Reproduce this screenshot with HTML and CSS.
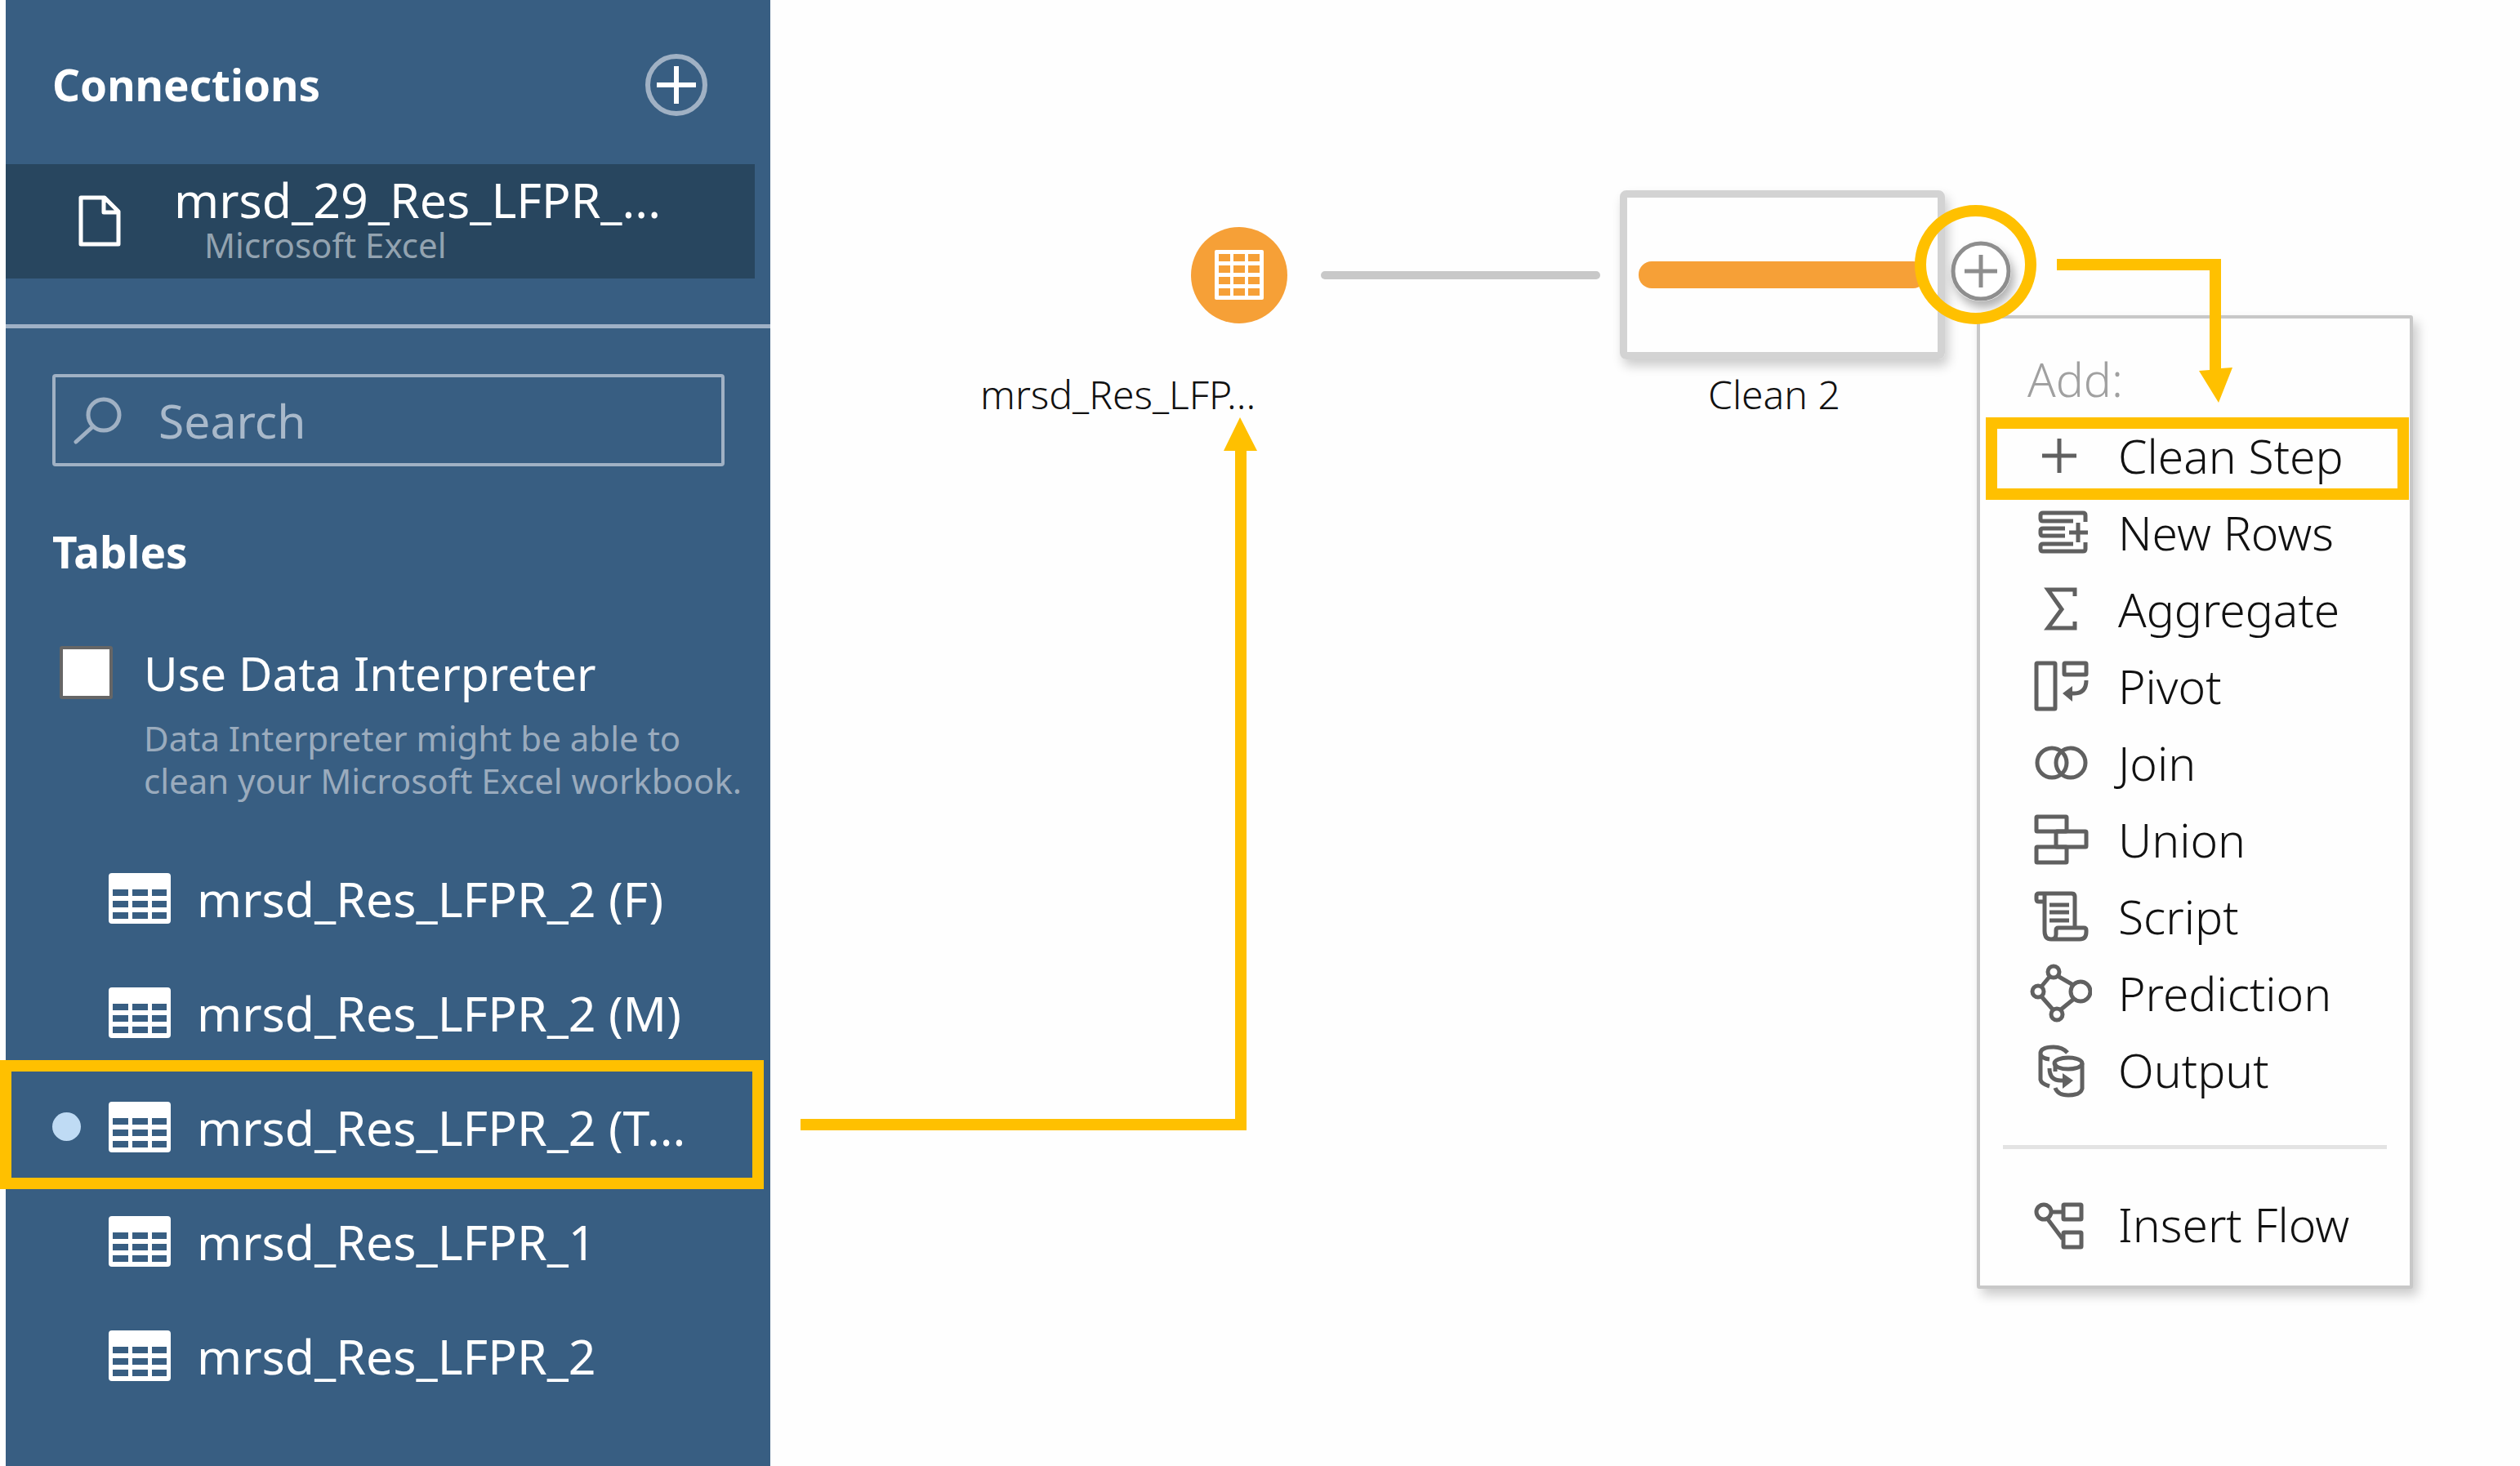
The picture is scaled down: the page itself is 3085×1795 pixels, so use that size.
FILE: index.html
```html
<!DOCTYPE html>
<html lang="en">
<head>
<meta charset="utf-8">
<title>Flow</title>
<link rel="stylesheet" href="styles.css">
</head>
<body>
<svg class="defs" aria-hidden="true">
  <symbol id="sheet" viewBox="0 0 76 62">
    <path fill="currentColor" fill-rule="evenodd" d="M4 0H72Q76 0 76 4V58Q76 62 72 62H4Q0 62 0 58V4Q0 0 4 0ZM5 20V28H24V20ZM29 20V28H48V20ZM53 20V28H71V20ZM5 34V42H24V34ZM29 34V42H48V34ZM53 34V42H71V34ZM5 48V56H24V48ZM29 48V56H48V48ZM53 48V56H71V48Z"/>
  </symbol>
</svg>
<div class="app">
  <aside class="sidebar">
    <header class="sidebar-head">
      <h2 class="heading">Connections</h2>
      <button class="add-connection" type="button" aria-label="Add connection">
        <svg viewBox="0 0 78 78"><circle cx="39" cy="39" r="35" fill="none" stroke="#a0b1c4" stroke-width="6"/><path d="M15 39H63M39 16V62" stroke="#fff" stroke-width="6"/></svg>
      </button>
    </header>
    <button class="connection" type="button">
      <svg class="file-icon" viewBox="0 0 54 64"><path d="M4 3H33L50 20V60H4ZM32 4V21H50" fill="none" stroke="#fff" stroke-width="5" stroke-linejoin="round"/></svg>
      <span class="connection-text"><span class="connection-name">mrsd_29_Res_LFPR_...</span><span class="connection-type">Microsoft Excel</span></span>
    </button>
    <section class="tables">
      <label class="search">
        <svg class="search-icon" viewBox="0 0 60 58"><circle cx="37" cy="22" r="19" fill="none" stroke="#a0b1c4" stroke-width="5"/><path d="M24 36L3 55" stroke="#a0b1c4" stroke-width="5" stroke-linecap="round"/></svg>
        <input class="search-input" type="text" placeholder="Search" aria-label="Search">
      </label>
      <h2 class="heading tables-heading">Tables</h2>
      <div class="interpreter">
        <input class="check" type="checkbox" id="interpreter">
        <label class="check-label" for="interpreter">Use Data Interpreter</label>
        <p class="hint">Data Interpreter might be able to<br>clean your Microsoft Excel workbook.</p>
      </div>
    </section>
    <ul class="table-list">
      <li class="table-item"><svg class="sheet-icon"><use href="#sheet"/></svg>mrsd_Res_LFPR_2 (F)</li>
      <li class="table-item"><svg class="sheet-icon"><use href="#sheet"/></svg>mrsd_Res_LFPR_2 (M)</li>
      <li class="table-item table-item-used"><svg class="sheet-icon"><use href="#sheet"/></svg>mrsd_Res_LFPR_2 (T...</li>
      <li class="table-item"><svg class="sheet-icon"><use href="#sheet"/></svg>mrsd_Res_LFPR_1</li>
      <li class="table-item"><svg class="sheet-icon"><use href="#sheet"/></svg>mrsd_Res_LFPR_2</li>
    </ul>
  </aside>
  <main class="canvas">
    <svg class="node-input" viewBox="0 0 118 118"><circle cx="59" cy="59" r="59" fill="#f6a037"/><path fill="#fff" fill-rule="evenodd" d="M31 28H87Q89 28 89 30V87Q89 89 87 89H31Q29 89 29 87V30Q29 28 31 28ZM34 33V42H48V33ZM52 33V42H66V33ZM70 33V42H84V33ZM34 47V56H48V47ZM52 47V56H66V47ZM70 47V56H84V47ZM34 61V70H48V61ZM52 61V70H66V61ZM70 61V70H84V61ZM34 75V84H48V75ZM52 75V84H66V75ZM70 75V84H84V75Z"/></svg>
    <div class="node-label label-input">mrsd_Res_LFP...</div>
    <div class="edge"></div>
    <div class="node-clean"><div class="node-bar"></div></div>
    <div class="node-label label-clean">Clean 2</div>
    <button class="add-step" type="button" aria-label="Add step"><svg viewBox="0 0 74 74"><circle cx="37" cy="37" r="34" fill="#fff" stroke="#8e8e8e" stroke-width="5"/><path d="M17 37H57M37 17V57" stroke="#8e8e8e" stroke-width="5"/></svg></button>

    <div class="menu" role="menu">
      <div class="menu-title">Add:</div>
      <button class="menu-item menu-item-marked" role="menuitem" type="button"><svg class="menu-icon" viewBox="0 0 76 76"><path d="M15 38H57M36 17V59"/></svg>Clean Step</button>
      <button class="menu-item" role="menuitem" type="button"><svg class="menu-icon" viewBox="0 0 76 76"><path d="M68 25V17Q68 14 65 14H16Q13 14 13 17V21Q13 24 16 24H53M43 33H16Q13 33 13 36V39Q13 42 16 42H43M53 52H16Q13 52 13 55V58Q13 61 16 61H65Q68 61 68 58V50M48 38H71M59 26V50"/></svg>New Rows</button>
      <button class="menu-item" role="menuitem" type="button"><svg class="menu-icon" viewBox="0 0 76 76"><path d="M55 22V14H22L39 38L22 61H55V53"/></svg>Aggregate</button>
      <button class="menu-item" role="menuitem" type="button"><svg class="menu-icon" viewBox="0 0 76 76"><rect x="8" y="10" width="23" height="56" rx="1"/><rect x="42" y="10" width="27" height="14" rx="1"/><path d="M69 31Q69 47 54 47H50"/><path class="solid" d="M40 47L52 38V57Z"/></svg>Pivot</button>
      <button class="menu-item" role="menuitem" type="button"><svg class="menu-icon" viewBox="0 0 76 76"><circle cx="27" cy="38" r="18"/><circle cx="50" cy="38" r="18"/></svg>Join</button>
      <button class="menu-item" role="menuitem" type="button"><svg class="menu-icon" viewBox="0 0 76 76"><rect x="8" y="10" width="37" height="18" rx="1"/><rect x="32" y="28" width="37" height="19" rx="1"/><rect x="8" y="47" width="37" height="19" rx="1"/></svg>Union</button>
      <button class="menu-item" role="menuitem" type="button"><svg class="menu-icon" viewBox="0 0 76 76"><path d="M17 20H11Q8 20 8 17V13Q8 10 11 10H51Q55 10 55 14V52M18 10V56Q18 66 26 66Q32 66 32 60V55Q32 52 35 52H66Q69 52 69 55V57Q69 66 61 66H26M24 24H48M24 33H48M24 43H48"/></svg>Script</button>
      <button class="menu-item" role="menuitem" type="button"><svg class="menu-icon" viewBox="0 0 76 76"><circle cx="29" cy="12" r="7"/><circle cx="10" cy="36" r="7"/><circle cx="62" cy="36" r="12"/><circle cx="33" cy="64" r="7"/><path d="M24 18L14 30M34 17L53 28M14 42L28 58M38 58L54 45"/></svg>Prediction</button>
      <button class="menu-item" role="menuitem" type="button"><svg class="menu-icon" viewBox="0 0 76 76"><path d="M46 17Q40 10 29 10Q13 10 13 18V50Q14 55 24 58M13 19Q15 24 24 25M31 40V30M64 30V61Q62 69 47 69Q34 69 31 60M24 36Q24 51 38 51H42"/><ellipse cx="47" cy="30" rx="17" ry="7"/><path class="solid" d="M53 51L40 42V61Z"/></svg>Output</button>
      <hr class="menu-rule">
      <button class="menu-item" role="menuitem" type="button"><svg class="menu-icon" viewBox="0 0 76 76"><circle cx="17" cy="23" r="9"/><rect x="41" y="14" width="22" height="18" rx="1"/><rect x="41" y="48" width="22" height="18" rx="1"/><path d="M27 23H41M22 32L40 56"/></svg>Insert Flow</button>
    </div>

    <div class="ring"></div>
    <svg class="arrow arrow-table" viewBox="0 0 560 874"><path d="M0 859H532V41H518L538 0L559 41H546V873H0Z"/></svg>
    <svg class="arrow arrow-menu" viewBox="0 0 216 176"><path d="M0 0H201V134L215 133L198 176L174 137L187 136V14H0Z"/></svg>
  </main>
</div>
</body>
</html>
```
FILE: styles.css
```css
* { box-sizing: border-box; }
body { margin: 0; background: #fefefe; font-family: "Noto Sans", sans-serif; font-size: 57px; line-height: 64px; color: #111; }
h2, p, ul { margin: 0; padding: 0; }
button, input { font: inherit; color: inherit; }
button { padding: 0; border: 0; background: none; text-align: left; }
svg { display: block; flex: none; }
.defs { position: absolute; width: 0; height: 0; }
.app { display: flex; min-height: 100vh; padding-left: 7px; }

.sidebar { flex: 0 0 936px; background: #385e82; color: #fff; }
.sidebar-head { display: flex; align-items: center; justify-content: space-between; height: 201px; padding: 6px 76px 0 57px; }
.heading { font-size: 53px; font-weight: 700; line-height: 64px; }
.add-connection, .add-connection svg { width: 78px; height: 78px; }
.connection { display: flex; align-items: center; gap: 64px; width: 917px; height: 140px; padding-left: 88px; background: #28465f; }
.file-icon { width: 54px; height: 64px; }
.connection-text { display: flex; flex-direction: column; padding-top: 2px; line-height: 56px; }
.connection-name, .table-item { font-size: 59px; }
.connection-type { padding-left: 37px; font-size: 42px; color: #93a3b0; }
.tables { margin-top: 56px; padding: 56px 20px 0 57px; border-top: 5px solid #9fb1c6; }
.search { display: flex; align-items: center; width: 823px; height: 113px; padding-left: 22px; gap: 44px; border: 4px solid #a0b1c4; border-radius: 4px; }
.search-icon { width: 60px; height: 58px; }
.search-input { flex: 1; min-width: 0; padding: 0; border: 0; outline: 0; background: none; }
.search-input::placeholder { color: #a9b9ca; opacity: 1; }
.tables-heading { margin-top: 73px; }
.interpreter { display: grid; grid-template-columns: 65px 1fr; column-gap: 38px; row-gap: 22px; align-items: center; margin-top: 83px; padding-left: 9px; }
.check { appearance: none; width: 65px; height: 65px; margin: 0; border: 4px solid #666; border-radius: 3px; background: #fff; }
.hint { grid-column: 2; font-size: 42px; line-height: 52px; white-space: nowrap; color: #9aabbd; }
.table-list { margin-top: 48px; list-style: none; }
.table-item { position: relative; display: flex; align-items: center; gap: 32px; height: 140px; padding-left: 126px; }
.sheet-icon { width: 76px; height: 62px; }
.table-item-used::before { content: ""; position: absolute; left: 57px; top: 52px; width: 35px; height: 35px; border-radius: 50%; background: #bfdbf4; }
.table-item-used::after { content: ""; position: absolute; inset: -12px 8px -6px -7px; border: 14px solid #ffc000; }

.canvas { position: relative; flex: 1; }
.node-input { position: absolute; left: 515px; top: 278px; width: 118px; height: 118px; }
.node-label { position: absolute; top: 451px; font-size: 48px; font-weight: 350; white-space: nowrap; }
.label-input { left: 257px; }
.label-clean { left: 1148px; }
.edge { position: absolute; left: 674px; top: 332px; width: 342px; height: 10px; border-radius: 5px; background: #c8c8c8; }
.node-clean { position: absolute; left: 1040px; top: 233px; display: flex; align-items: center; width: 398px; height: 207px; padding: 0 14px; border: 9px solid #d3d3d3; border-radius: 8px; box-shadow: 4px 8px 14px rgba(0, 0, 0, .2); }
.node-bar { flex: 1; height: 33px; border-radius: 16px; background: #f6a037; }
.add-step { position: absolute; left: 1445px; top: 295px; border-radius: 50%; box-shadow: 4px 8px 12px rgba(0, 0, 0, .3); }
.add-step svg { width: 74px; height: 74px; }
.ring { position: absolute; left: 1401px; top: 251px; width: 149px; height: 146px; border: 14px solid #ffc000; border-radius: 50%; }

.menu { position: absolute; left: 1477px; top: 386px; width: 534px; padding: 42px 0 28px; border: 4px solid #c8c8c8; border-radius: 3px; background: #fefefe; box-shadow: 6px 8px 14px rgba(0, 0, 0, .2); font-weight: 350; }
.menu-title { padding: 0 0 15px 58px; color: #a0a0a0; }
.menu-item { position: relative; display: flex; align-items: center; gap: 32px; width: 100%; height: 94px; padding-left: 61px; white-space: nowrap; }
.menu-item-marked::after { content: ""; position: absolute; inset: 0 1px -7px 7px; border: 14px solid #ffc000; }
.menu-icon { width: 76px; height: 76px; fill: none; stroke: #606060; stroke-width: 5; }
.menu-icon .solid { fill: #606060; stroke: none; }
.menu-rule { height: 5px; margin: 45px 28px; border: 0; background: #e3e3e3; }

.arrow { position: absolute; fill: #ffc000; }
.arrow-table { left: 37px; top: 511px; width: 560px; height: 874px; }
.arrow-menu { left: 1575px; top: 317px; width: 216px; height: 176px; }
```
